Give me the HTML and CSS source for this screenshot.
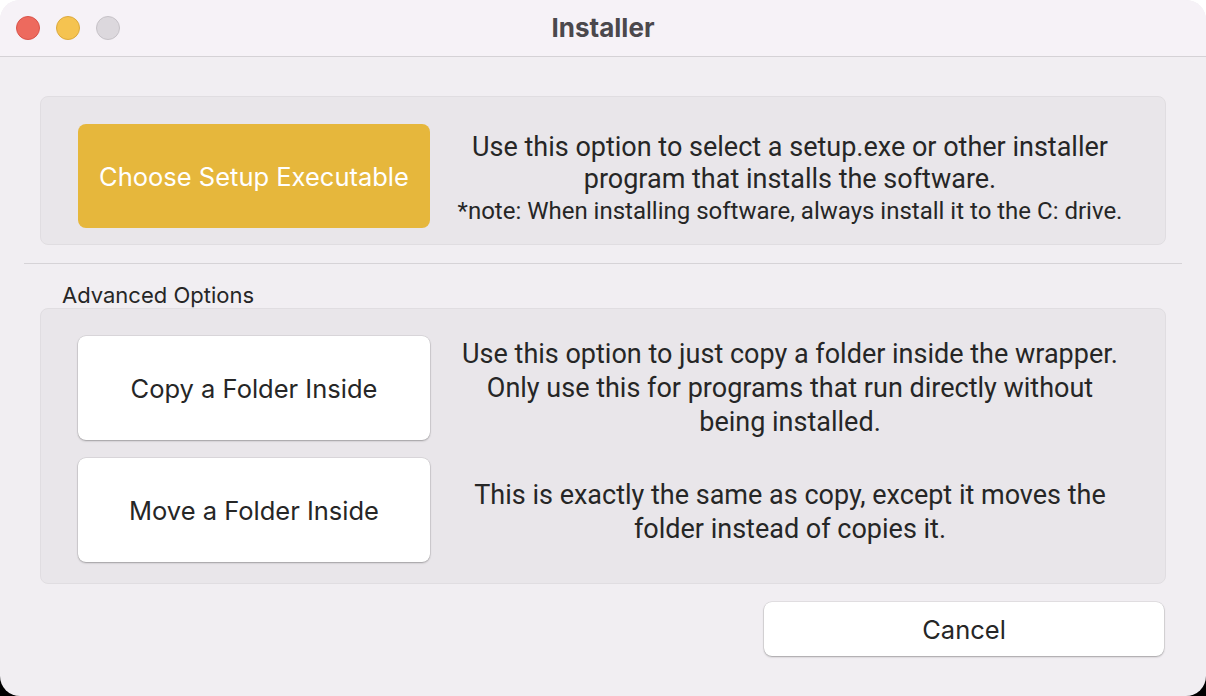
FILE: index.html
```html
<!DOCTYPE html>
<html>
<head>
<meta charset="utf-8">
<link rel="stylesheet" href="styles.css">
</head>
<body>
<div class="window">
  <div class="titlebar">
    <div class="lights">
      <span class="light red"></span>
      <span class="light yellow"></span>
      <span class="light gray"></span>
    </div>
    <div class="title">Installer</div>
  </div>
  <div class="content">
    <div class="card card-top">
      <button class="btn btn-primary">Choose Setup Executable</button>
      <div class="desc desc-top">
        <div>Use this option to select a setup.exe or other installer<br>program that installs the software.</div>
        <div class="note">*note: When installing software, always install it to the C: drive.</div>
      </div>
    </div>
    <div class="separator"></div>
    <div class="section-label">Advanced Options</div>
    <div class="card card-adv">
      <div class="row">
        <button class="btn">Copy a Folder Inside</button>
        <div class="desc">Use this option to just copy a folder inside the wrapper.<br>Only use this for programs that run directly without<br>being installed.</div>
      </div>
      <div class="row">
        <button class="btn">Move a Folder Inside</button>
        <div class="desc desc-move">This is exactly the same as copy, except it moves the<br>folder instead of copies it.</div>
      </div>
    </div>
    <div class="footer">
      <button class="btn btn-cancel">Cancel</button>
    </div>
  </div>
</div>
</body>
</html>
```
FILE: styles.css
```css
html, body {
  margin: 0;
  padding: 0;
}
body {
  width: 1206px;
  height: 696px;
  background: linear-gradient(#ffffff 0 50%, #000000 50% 100%);
  font-family: Inter, "Noto Sans", sans-serif;
  overflow: hidden;
}
.window {
  width: 1206px;
  height: 696px;
  border-radius: 20px;
  background: #f1eef2;
  overflow: hidden;
}
.titlebar {
  height: 56px;
  background: #f6f2f7;
  border-bottom: 1px solid #d5d2d6;
  position: relative;
  display: flex;
  align-items: center;
  justify-content: center;
}
.lights {
  position: absolute;
  left: 16px;
  top: 16px;
  display: flex;
  gap: 16px;
}
.light {
  width: 24px;
  height: 24px;
  border-radius: 50%;
  box-sizing: border-box;
}
.red { background: #ed6a5e; border: 1px solid #d9534a; }
.yellow { background: #f5c350; border: 1px solid #dba93d; }
.gray { background: #dcd8dd; border: 1px solid #c6c2c7; }
.title {
  font-weight: 700;
  font-size: 26px;
  color: #4b484c;
  margin-top: -2px;
}
.content {
  padding: 39px 40px 0 40px;
}
.card {
  background: #e9e6ea;
  border: 1px solid #e0dde1;
  border-radius: 8px;
}
.card-top {
  height: 147px;
  box-sizing: content-box;
  padding: 0 15px 0 37px;
  display: flex;
  align-items: flex-start;
}
.card-top .btn-primary {
  margin-top: 27px;
}
.row {
  display: flex;
  align-items: center;
}
.btn {
  width: 352px;
  height: 104px;
  flex: none;
  border: none;
  border-radius: 8px;
  background: #ffffff;
  box-shadow: 0 0 0 0.5px rgba(0,0,0,0.12), 0 1px 2px rgba(0,0,0,0.28);
  font-family: Inter, "Noto Sans", sans-serif;
  font-size: 25.5px;
  color: #262626;
  padding: 0;
}
.btn-primary {
  background: #e6b73c;
  color: #ffffff;
  box-shadow: none;
}
.desc {
  flex: 1;
  text-align: center;
  font-family: Roboto, "Noto Sans", sans-serif;
  font-size: 27px;
  line-height: 34px;
  color: #262626;
}
.desc.desc-top {
  margin-top: 34px;
  line-height: 32px;
}
.desc.desc-move {
  margin-top: 4px;
}
.note {
  font-size: 24px;
}
.desc-top .note {
  line-height: 33px;
}
.separator {
  height: 1px;
  background: #d6d3d7;
  margin: 18px -16px 0 -16px;
}
.section-label {
  font-size: 22px;
  color: #262626;
  padding-left: 22px;
  margin-top: 18px;
  line-height: 26px;
}
.card-adv {
  margin-top: 0;
  padding: 27px 15px 21px 37px;
  display: flex;
  flex-direction: column;
  gap: 18px;
}
.footer {
  display: flex;
  justify-content: flex-end;
  margin-top: 18px;
  padding-right: 2px;
}
.btn-cancel {
  width: 400px;
  height: 54px;
}
```
